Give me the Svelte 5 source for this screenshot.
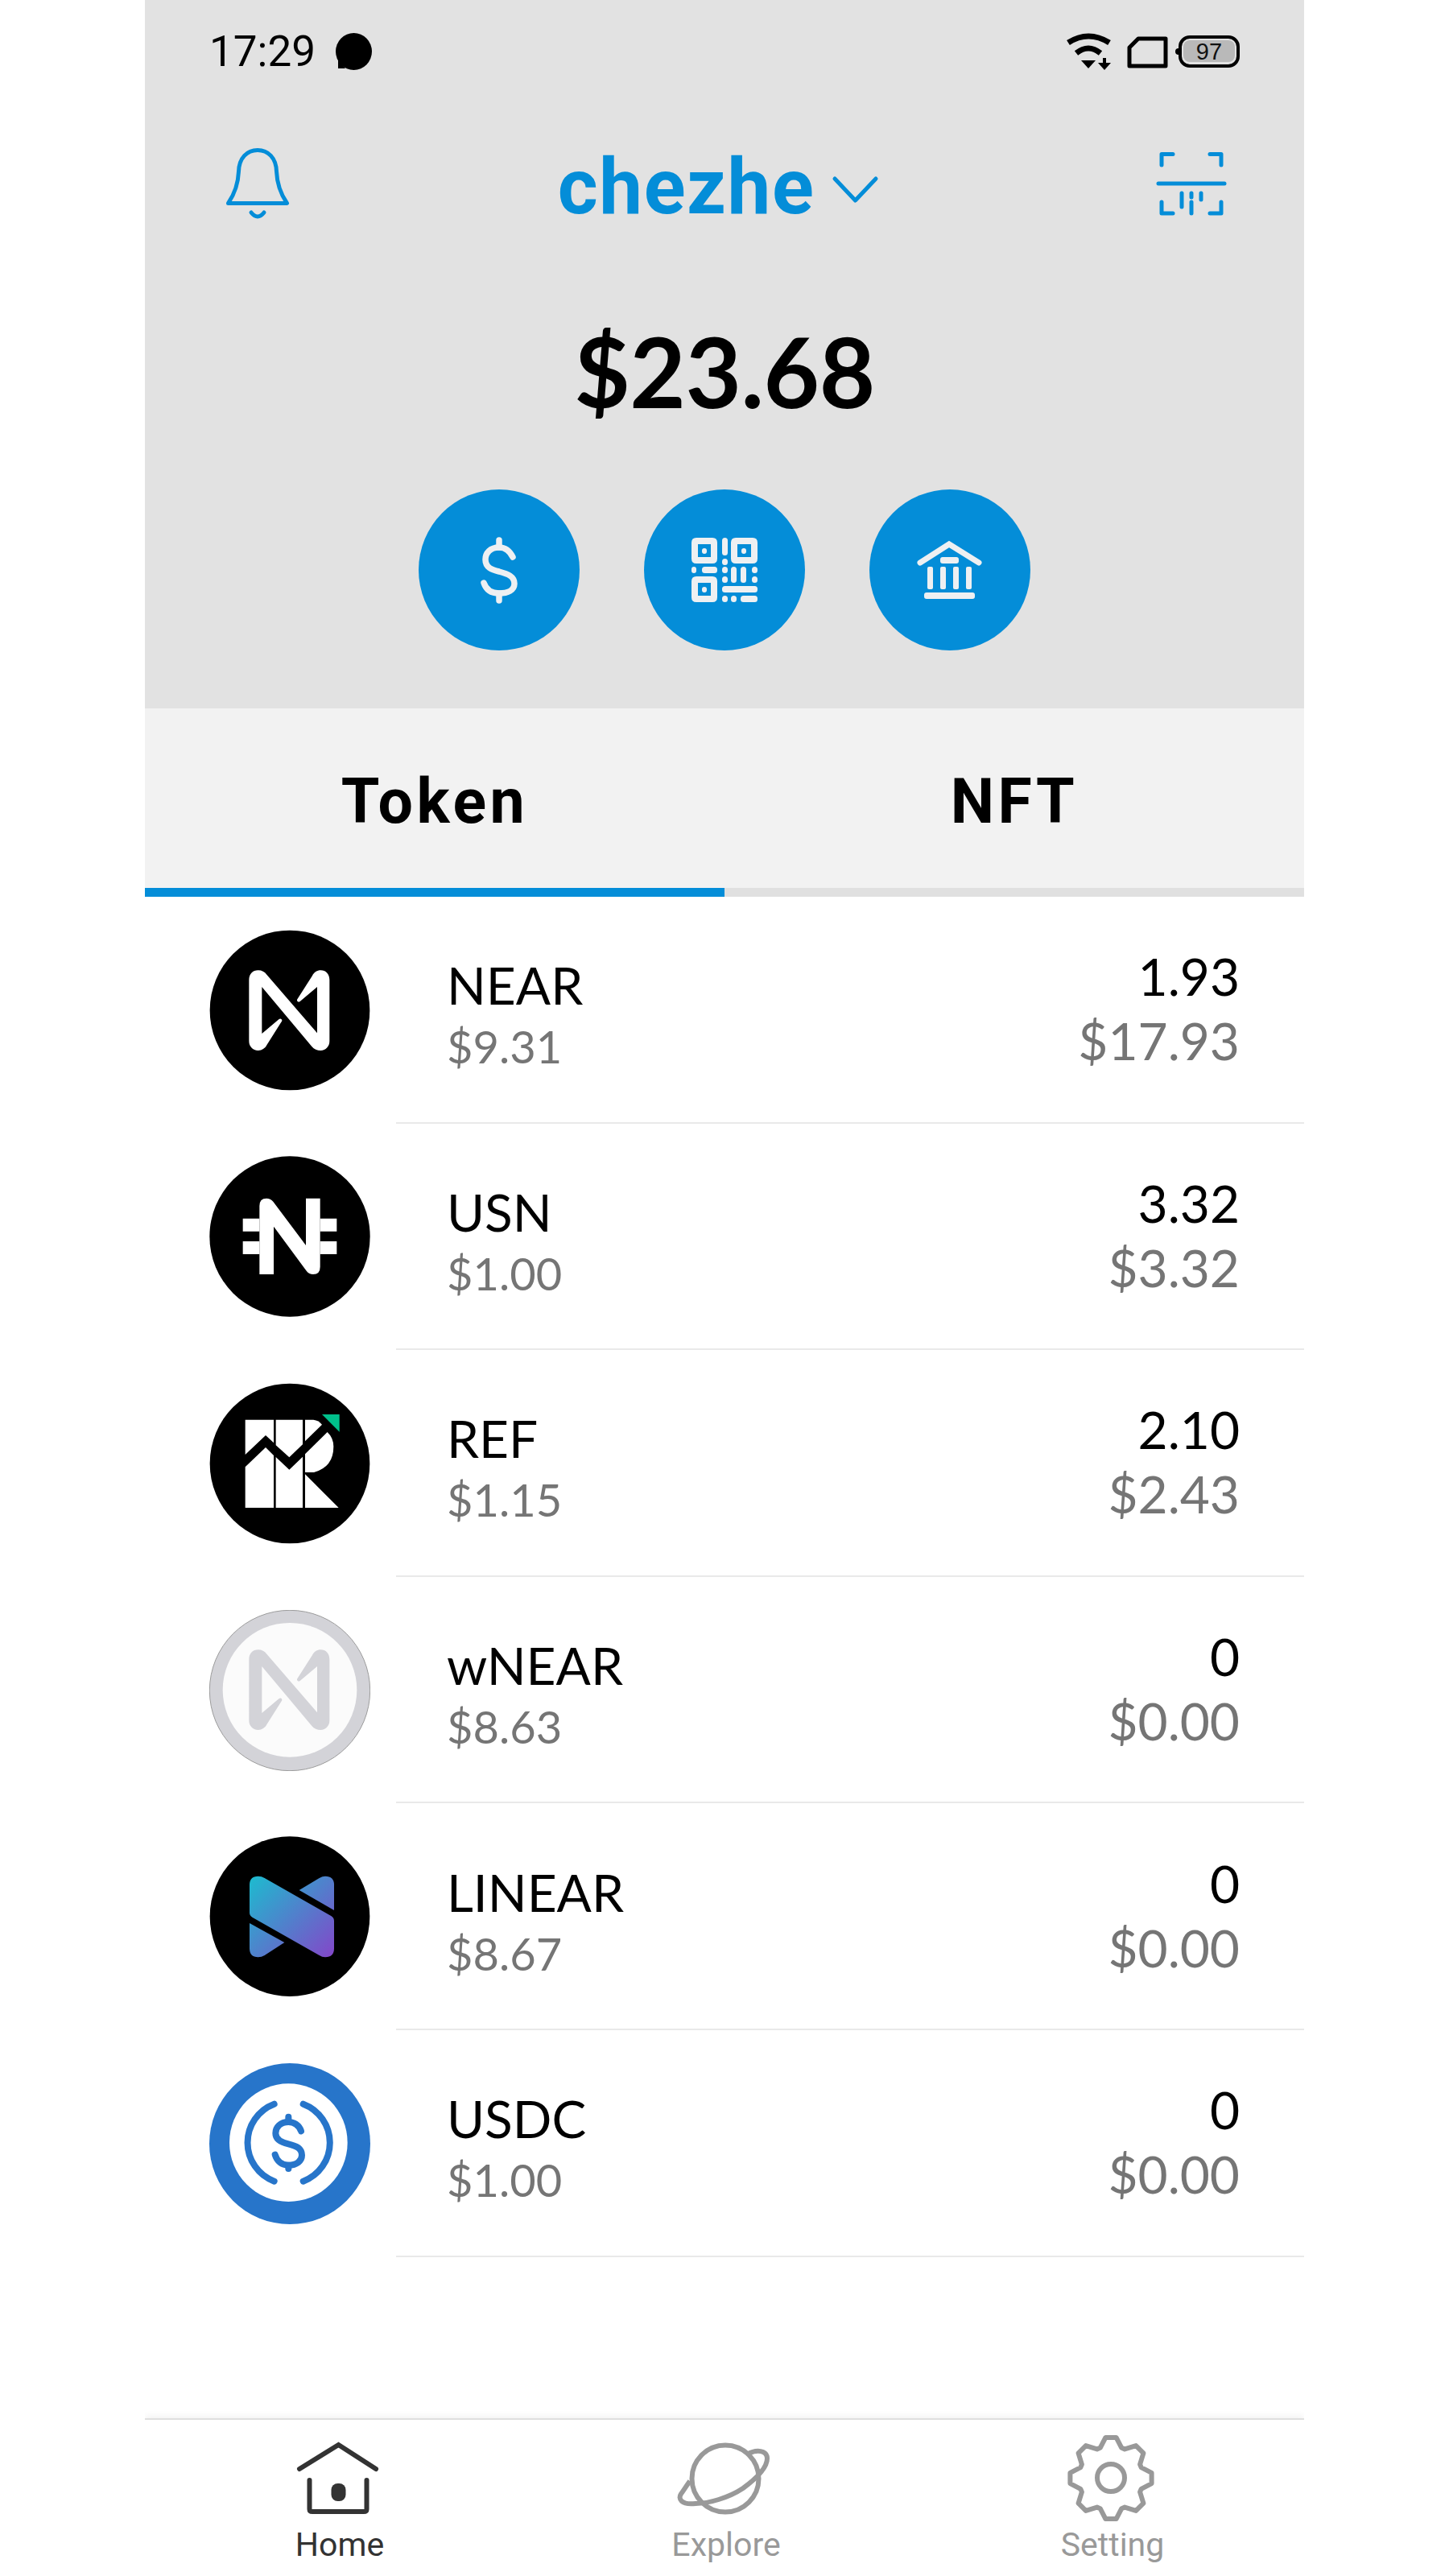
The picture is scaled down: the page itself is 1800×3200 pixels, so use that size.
<script>
  const tokens = [
    { id: 'near', name: 'NEAR', price: '$9.31', amount: '1.93', value: '$17.93' },
    { id: 'usn', name: 'USN', price: '$1.00', amount: '3.32', value: '$3.32' },
    { id: 'ref', name: 'REF', price: '$1.15', amount: '2.10', value: '$2.43' },
    { id: 'wnear', name: 'wNEAR', price: '$8.63', amount: '0', value: '$0.00' },
    { id: 'linear', name: 'LINEAR', price: '$8.67', amount: '0', value: '$0.00' },
    { id: 'usdc', name: 'USDC', price: '$1.00', amount: '0', value: '$0.00' }
  ];
  const nearPath = 'M238 262C238 240 252 226 272 226C286 226 296 232 304 242L492 460L492 288L428 342C422 347 414 340 418 334L474 246C480 234 492 226 505 226C524 226 538 240 538 262L538 490C538 510 524 525 505 525C492 525 480 520 472 510L286 288L286 462L350 408C356 403 364 410 360 416L304 505C298 517 286 525 272 525C252 525 238 510 238 490Z';

  function gear(cx, cy) {
    const pts = [];
    for (let i = 0; i < 8; i++) {
      const a = (i * Math.PI) / 4 - Math.PI / 2;
      const spec = [[-0.34, 40], [-0.13, 51], [0.13, 51], [0.34, 40]];
      for (const [d, r] of spec) {
        pts.push(`${(cx + r * Math.cos(a + d)).toFixed(1)} ${(cy + r * Math.sin(a + d)).toFixed(1)}`);
      }
    }
    return 'M' + pts.join('L') + 'Z';
  }
  const gearPath = gear(1380, 3078.5);
</script>

<div class="phone">
  <section class="head">
    <div class="status">
      <div class="status-left">
        <span class="time">17:29</span>
        <svg class="blob" viewBox="415 41 46 46" width="46" height="46">
          <ellipse cx="438.500" cy="64" rx="22.500" ry="23" />
          <path d="M419 74V85H428Z" />
        </svg>
      </div>
      <div class="status-right">
        <svg class="wifi-icon" viewBox="1323 41 59 47" width="59" height="47">
          <path class="wifi" d="M1327 53Q1352 37 1378 53M1337 66Q1352 54 1367 66" />
          <path d="M1343 75H1361L1352 85Z" />
          <path d="M1370 72H1374V78H1380L1372 87L1364 78H1370Z" />
        </svg>
        <svg viewBox="1399 43 53 41" width="53" height="41">
          <path class="sim" d="M1403 58L1414 47H1448V81H1403Z" />
        </svg>
        <svg class="battery" viewBox="1459 42 83 44" width="83" height="44">
          <circle cx="1464" cy="64" r="4" />
          <rect class="bat-out" x="1466" y="46" width="72" height="36" rx="12" />
          <rect class="bat-in" x="1470" y="50" width="64" height="27" rx="8" />
          <text x="1502" y="74" text-anchor="middle">97</text>
        </svg>
      </div>
    </div>

    <div class="top">
      <svg class="stroke-blue" viewBox="279 182 82 92" width="82" height="92">
        <path d="M283.500 252.500C292 240 296 225 296.500 213C297 196 307 186.500 320 186.500C333 186.500 343 196 343.500 213C344 225 348 240 356.500 252.500Z" />
        <path d="M312 264Q320 274 328 264" />
      </svg>
      <div class="account">
        <span class="account-name">chezhe</span>
        <svg class="stroke-blue chevron" viewBox="1033 218 59 35" width="59" height="35">
          <path d="M1037 222L1062.500 249L1088 222" />
        </svg>
      </div>
      <svg class="stroke-blue" viewBox="1435 187 90 82" width="90" height="82">
        <path d="M1443 205V191.500H1457M1517 205V191.500H1503" />
        <path d="M1439 228H1521" />
        <path d="M1443 251V265H1457M1517 251V265H1503" />
        <path d="M1468 240V257M1480 240V245M1480 251V265M1492 240V248" />
      </svg>
    </div>

    <div class="amount">$23.68</div>

    <div class="actions">
      <button class="action" aria-label="Send">
        <svg class="stroke-light" viewBox="590 660 60 96" width="60" height="96">
          <path d="M637 692C633 684 628 680 620 680C609 680 603 687 603 695C603 705 611 708 620 710C631 713 639 716 639 725C639 733 631 737 620 737C611 737 604 733 601 724" />
          <path d="M620 671V680M620 737V746" />
        </svg>
      </button>
      <button class="action" aria-label="Receive">
        <svg viewBox="855 664 90 88" width="90" height="88">
          <g class="light-fill">
            <path fill-rule="evenodd" d="M865 668H885Q891 668 891 674V694Q891 700 885 700H865Q859 700 859 694V674Q859 668 865 668ZM867 676V692H883V676Z" />
            <path fill-rule="evenodd" d="M914 668H935Q941 668 941 674V694Q941 700 935 700H914Q908 700 908 694V674Q908 668 914 668ZM916 676V692H933V676Z" />
            <path fill-rule="evenodd" d="M865 716H885Q891 716 891 722V742Q891 748 885 748H865Q859 748 859 742V722Q859 716 865 716ZM867 724V740H883V724Z" />
            <rect x="872" y="681" width="6" height="7" rx="3" />
            <rect x="921" y="681" width="6" height="7" rx="3" />
            <rect x="872" y="729" width="6" height="7" rx="3" />
            <rect x="897" y="668" width="7" height="22" rx="3.500" />
            <rect x="897" y="694" width="7" height="8" rx="3.500" />
            <rect x="859" y="704" width="6" height="8" rx="3" />
            <rect x="872" y="704" width="19" height="8" rx="3.500" />
            <rect x="897" y="704" width="7" height="8" rx="3.500" />
            <rect x="897" y="716" width="7" height="8" rx="3.500" />
            <rect x="908" y="704" width="7" height="20" rx="3.500" />
            <rect x="920" y="704" width="7" height="20" rx="3.500" />
            <rect x="934" y="704" width="7" height="8" rx="3.500" />
            <rect x="934" y="716" width="7" height="8" rx="3.500" />
            <rect x="897" y="728" width="44" height="8" rx="3.500" />
            <rect x="897" y="740" width="7" height="8" rx="3.500" />
            <rect x="908" y="740" width="7" height="8" rx="3.500" />
            <rect x="920" y="740" width="21" height="8" rx="3.500" />
          </g>
        </svg>
      </button>
      <button class="action" aria-label="Bank">
        <svg viewBox="1136 668 88 80" width="88" height="80">
          <path class="roof" d="M1143 699L1179 676L1216 699" />
          <g class="light-fill">
            <rect x="1168" y="692" width="23" height="8" rx="3" />
            <rect x="1152" y="704" width="7" height="28" rx="2" />
            <rect x="1168" y="704" width="7" height="28" rx="2" />
            <rect x="1184" y="704" width="7" height="28" rx="2" />
            <rect x="1200" y="704" width="7" height="28" rx="2" />
            <rect x="1148" y="736" width="63" height="8" rx="3" />
          </g>
        </svg>
      </button>
    </div>
  </section>

  <div class="tabs">
    <div class="tab active">Token</div>
    <div class="tab">NFT</div>
  </div>

  <ul class="list">
    {#each tokens as t}
      <li class="row">
        <div class="logo">
          {#if t.id === 'near'}
            <svg viewBox="90 75 600 600" width="200" height="200">
              <circle cx="390" cy="375" r="298" fill="#000" />
              <path d={nearPath} fill="#fff" />
            </svg>
          {:else if t.id === 'usn'}
            <svg viewBox="90 82 600 600" width="200" height="200">
              <circle cx="390" cy="382" r="299" fill="#000" />
              <path fill="#fff" d="M277 268Q277 240 303 240Q318 240 328 252L450 415V240H503V495Q503 523 477 523Q462 523 452 510L330 345V523H277Z" />
              <path fill="#fff" d="M215 315H277V363H215ZM215 400H277V448H215ZM503 315H565V363H503ZM503 400H565V448H503Z" />
            </svg>
          {:else if t.id === 'ref'}
            <svg viewBox="90 85 600 600" width="200" height="200">
              <circle cx="390" cy="385" r="298" fill="#000" />
              <g fill="#fff">
                <path d="M224 222H330V308L300 280L224 352Z" />
                <path d="M224 398L300 325L330 355V550H224Z" />
                <path d="M338 222H438V314L388 362L338 317Z" />
                <path d="M338 361L388 408L438 360V550H338Z" />
                <path d="M447 222H478Q498 224 510 240L447 302Z" />
                <path d="M447 350L530 268Q553 290 553 322Q553 398 480 418H447Z" />
                <path d="M447 425L572 550H447Z" />
              </g>
              <path fill="#00c08b" d="M510 202H575V267Z" />
            </svg>
          {:else if t.id === 'wnear'}
            <svg viewBox="90 90 600 600" width="200" height="200">
              <circle cx="390" cy="390" r="299" fill="#d3d3d8" stroke="#9c9c9c" stroke-width="3" />
              <circle cx="390" cy="388" r="250" fill="#fbfbfb" />
              <path d={nearPath} fill="#d3d3d8" transform="translate(0 12)" />
            </svg>
          {:else if t.id === 'linear'}
            <svg viewBox="90 94 600 600" width="200" height="200">
              <defs>
                <linearGradient id="lin" gradientUnits="userSpaceOnUse" x1="240" y1="243" x2="555" y2="545">
                  <stop offset="0" stop-color="#1cbccf" />
                  <stop offset="1" stop-color="#8446c9" />
                </linearGradient>
              </defs>
              <circle cx="390" cy="393" r="298" fill="#000" />
              <g fill="url(#lin)">
                <path d="M240 275Q240 243 272 243Q285 243 296 250L545 392Q555 398 555 410V512Q555 545 522 545Q510 545 500 538L250 396Q240 390 240 380Z" />
                <path d="M425 295L500 250Q512 243 522 243Q555 243 555 275V370Z" />
                <path d="M240 418L370 490L296 538Q285 545 272 545Q240 545 240 512Z" />
              </g>
            </svg>
          {:else}
            <svg viewBox="90 97 600 600" width="200" height="200">
              <circle cx="390" cy="397" r="300" fill="#2775ca" />
              <circle cx="385" cy="393" r="220" fill="#fff" />
              <g fill="none" stroke="#2775ca" stroke-width="24" stroke-linecap="round">
                <path d="M332 249A154 154 0 0 0 332 537" />
                <path d="M440 249A154 154 0 0 1 440 537" />
                <path d="M432 350C425 328 405 316 385 316C355 316 337 335 337 358C337 382 358 392 385 398C415 405 435 415 435 440C435 462 415 477 385 477C360 477 342 462 335 438" />
                <path d="M385 297V316M385 477V490" />
              </g>
            </svg>
          {/if}
        </div>
        <div class="row-body">
          <div class="col">
            <div class="name">{t.name}</div>
            <div class="price">{t.price}</div>
          </div>
          <div class="col end">
            <div class="qty">{t.amount}</div>
            <div class="value">{t.value}</div>
          </div>
        </div>
      </li>
    {/each}
  </ul>

  <nav class="nav">
    <div class="nav-item current">
      <svg class="nav-icon" viewBox="360 3020 120 116" width="120" height="116">
        <path class="dark-line" d="M372 3067L420.500 3037L467 3067" />
        <path class="dark-line" d="M384.500 3081V3117Q384.500 3120 388 3120H452Q455.500 3120 455.500 3117V3081" />
        <rect x="411.500" y="3085" width="18" height="22" rx="8" fill="#333" />
      </svg>
      <span>Home</span>
    </div>
    <div class="nav-item">
      <svg class="nav-icon" viewBox="840 3020 120 116" width="120" height="116">
        <g class="grey-line">
          <circle cx="901" cy="3079" r="41.500" />
          <path d="M928 3049C940 3042 953 3044 953 3054C953 3066 938 3080 923 3091C905 3103 880 3110 864 3110C846 3112 842 3104 846 3098C849 3094 852 3089 857 3082" />
        </g>
      </svg>
      <span>Explore</span>
    </div>
    <div class="nav-item">
      <svg class="nav-icon" viewBox="1320 3020 120 116" width="120" height="116">
        <g class="grey-line">
          <path d={gearPath} />
          <circle cx="1380" cy="3078" r="17" />
        </g>
      </svg>
      <span>Setting</span>
    </div>
  </nav>
</div>

<style>
  :global(body) {
    margin: 0;
    background: #fff;
  }
  .phone {
    width: 1440px;
    height: 3200px;
    margin-left: 180px;
    display: flex;
    flex-direction: column;
    background: #fff;
    font-family: Lato, "Liberation Sans", sans-serif;
    overflow: hidden;
  }
  svg {
    display: block;
    flex: none;
  }
  .head {
    height: 880px;
    background: #e2e2e2;
    display: flex;
    flex-direction: column;
    box-sizing: border-box;
  }
  .status {
    height: 128px;
    padding: 0 80px;
    display: flex;
    align-items: center;
    justify-content: space-between;
  }
  .status-left {
    display: flex;
    align-items: center;
    gap: 24px;
  }
  .time {
    font: 400 53px/60px Roboto, sans-serif;
    color: #000;
  }
  .status-right {
    display: flex;
    align-items: center;
    gap: 7px;
    margin-right: -2px;
  }
  .wifi-icon {
    margin-right: 10px;
  }
  .wifi {
    fill: none;
    stroke: #000;
    stroke-width: 7;
  }
  .sim {
    fill: none;
    stroke: #000;
    stroke-width: 5;
    stroke-linejoin: round;
  }
  .bat-out {
    fill: none;
    stroke: #000;
    stroke-width: 4;
  }
  .bat-in {
    fill: #b9b9b9;
  }
  .battery text {
    font: 400 29px "Liberation Sans", sans-serif;
    fill: #111;
  }
  .top {
    height: 200px;
    padding: 0 95px 0 99px;
    display: flex;
    align-items: center;
    justify-content: space-between;
  }
  .stroke-blue {
    fill: none;
    stroke: #048dd8;
    stroke-width: 5;
    stroke-linecap: round;
    stroke-linejoin: round;
  }
  .account {
    display: flex;
    align-items: center;
    gap: 21px;
    margin-left: -11px;
    margin-top: 8px;
  }
  .chevron {
    margin-top: 6px;
  }
  .account-name {
    font: 700 96px/110px Roboto, sans-serif;
    letter-spacing: 1.600px;
    color: #048dd8;
  }
  .amount {
    margin-top: 48px;
    height: 170px;
    text-align: center;
    font: 700 120px/170px Lato, sans-serif;
    letter-spacing: -0.5px;
    color: #000;
  }
  .actions {
    margin-top: 62px;
    display: flex;
    justify-content: center;
    gap: 80px;
  }
  .action {
    width: 200px;
    height: 200px;
    padding: 0;
    border: 0;
    border-radius: 50%;
    background: #048dd8;
    display: flex;
    align-items: center;
    justify-content: center;
  }
  .stroke-light {
    fill: none;
    stroke: #eef0f2;
    stroke-width: 7.500;
    stroke-linecap: round;
  }
  .light-fill {
    fill: #eef0f2;
  }
  .roof {
    fill: none;
    stroke: #eef0f2;
    stroke-width: 7;
    stroke-linecap: round;
    stroke-linejoin: miter;
  }
  .tabs {
    display: flex;
    background: #f2f2f2;
  }
  .tab {
    flex: 1;
    height: 234px;
    padding-top: 8px;
    box-sizing: border-box;
    border-bottom: 11px solid #e0e0e0;
    display: flex;
    align-items: center;
    justify-content: center;
    font: 700 77px/90px Roboto, sans-serif;
    letter-spacing: 4.500px;
    color: #000;
  }
  .tab.active {
    border-bottom-color: #048dd8;
  }
  .list {
    list-style: none;
    margin: 0;
    padding: 0;
  }
  .row {
    height: 281.6px;
    display: flex;
    align-items: center;
    padding-left: 80px;
  }
  .logo {
    width: 200px;
    height: 200px;
    flex: none;
  }
  .row-body {
    flex: 1;
    height: 100%;
    margin-left: 32px;
    padding: 0 80px 0 63px;
    box-sizing: border-box;
    border-bottom: 2px solid #e9e9e9;
    display: flex;
    align-items: center;
    justify-content: space-between;
  }
  .col {
    display: flex;
    flex-direction: column;
    margin-top: 12px;
  }
  .col.end {
    align-items: flex-end;
    margin-top: -1px;
  }
  .name {
    font-size: 64px;
    line-height: 80px;
    color: #000;
  }
  .price {
    font-size: 56px;
    line-height: 71px;
    color: #757575;
  }
  .qty {
    font-size: 64px;
    line-height: 80px;
    color: #000;
  }
  .value {
    font-size: 64px;
    line-height: 80px;
    color: #757575;
  }
  .nav {
    margin-top: auto;
    height: 196px;
    border-top: 2px solid #dfdfdf;
    box-shadow: 0 -3px 8px rgba(0, 0, 0, 0.05);
    display: flex;
    box-sizing: border-box;
  }
  .nav-item {
    flex: 1;
    display: flex;
    flex-direction: column;
    align-items: center;
    padding-top: 14px;
    font: 400 41px/50px Roboto, sans-serif;
    color: #999;
  }
  .nav-item span {
    padding-left: 4px;
  }
  .nav-item.current {
    color: #333;
  }
  .dark-line {
    fill: none;
    stroke: #333;
    stroke-width: 6;
    stroke-linecap: round;
  }
  .grey-line {
    fill: none;
    stroke: #999;
    stroke-width: 6;
    stroke-linejoin: round;
  }
</style>
